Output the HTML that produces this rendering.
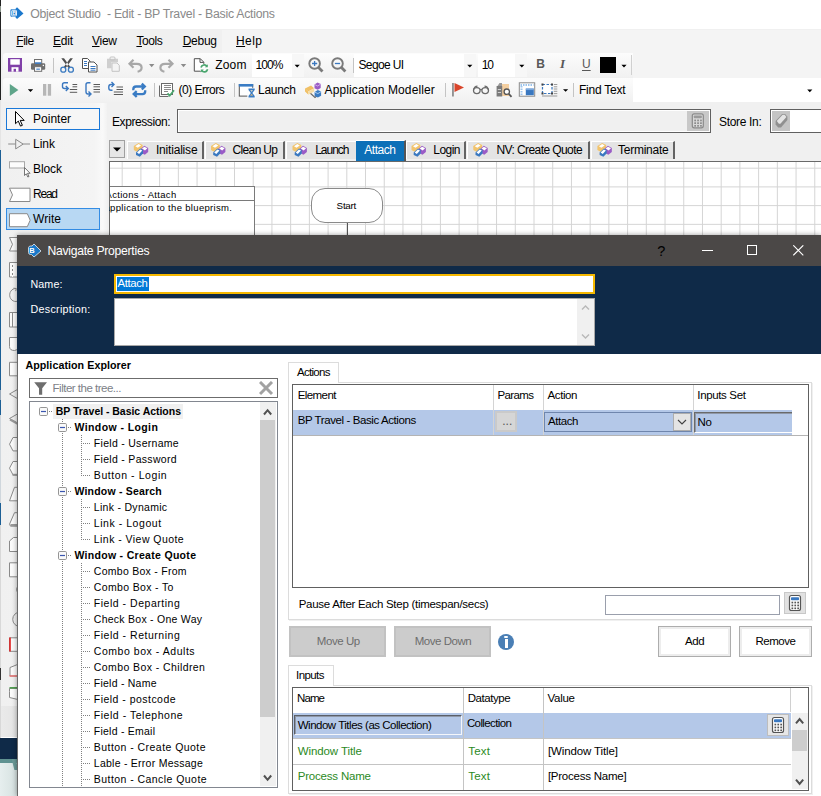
<!DOCTYPE html>
<html><head><meta charset="utf-8"><title>Object Studio - Navigate Properties</title>
<style>
html,body{margin:0;padding:0}
body{width:821px;height:796px;overflow:hidden;position:relative;background:#f0f0f0;font-family:"Liberation Sans",sans-serif;font-size:12px}
div,span,svg{position:absolute;box-sizing:border-box}
.t{white-space:pre;line-height:1}
.t u{text-decoration-thickness:1px;text-underline-offset:1px}
.cv{clip-path:inset(0 0 0 4.5px)}
.tab{top:141px;height:18px;background:#e4e4e4;border-top:1px solid #fff;border-left:1px solid #fff;border-right:2px solid #636363}
.sep{width:1px;background:#bdbdbd}
</style></head><body>
<!-- main title bar -->
<div style="left:0;top:0;width:821px;height:29px;background:#fff"></div>
<!-- menu bar -->
<div style="left:0;top:29px;width:821px;height:24px;background:#f0f0f0"></div>
<div style="left:222px;top:30px;width:599px;height:23px;background:#f4f4f4"></div>
<div style="left:633px;top:53px;width:188px;height:25px;background:#f4f4f4"></div>
<!-- toolbars -->
<div id="tb1" style="left:3px;top:53px;width:630px;height:24px;background:linear-gradient(#fcfcfc,#f1f1f1);border-radius:3px 0 0 0"></div>
<div id="tb2" style="left:3px;top:78px;width:818px;height:24px;background:linear-gradient(#fcfcfc,#f1f1f1);border-radius:3px 0 0 0"></div>
<!-- toolbar combos -->
<div style="left:252px;top:54px;width:52px;height:23px;background:linear-gradient(to right,#fff 40px,#f7f7f7 40px)"></div>
<div style="left:354px;top:54px;width:122px;height:23px;background:linear-gradient(to right,#fff 110px,#f7f7f7 110px)"></div>
<div style="left:478px;top:54px;width:49px;height:23px;background:linear-gradient(to right,#fff 37px,#f7f7f7 37px)"></div>
<div style="left:633px;top:78px;width:188px;height:24px;background:#fff"></div>
<div style="left:600px;top:57px;width:16px;height:16px;background:#000"></div>
<svg style="left:0;top:0" width="821" height="104" viewBox="0 0 821 104">
<!-- logo -->
<g id="logo1"><path d="M11.600 9.200h3.600l1.800-1.900l6.500 6.100l-6.500 5.500l-2-2.100h-3.400q-1.200 0-1.200-1.200v-5.200q0-1.200 1.200-1.200z" fill="#1b78cc"/><rect x="11.700" y="10.300" width="4.800" height="5.600" rx=".8" fill="none" stroke="#fff" stroke-width=".9"/><text x="12.300" y="15.300" font-size="5.500" font-weight="700" fill="#fff" font-family="Liberation Sans, sans-serif">B</text></g>
<!-- save -->
<path d="M8 58h14v13.700h-14z" fill="#8040a8"/><rect x="10.300" y="59.2" width="9.500" height="5.500" fill="#fff"/><rect x="11.500" y="67.200" width="7" height="4.500" fill="#fff"/><rect x="13.600" y="68.800" width="2.400" height="2.900" fill="#8040a8"/>
<!-- print -->
<rect x="31" y="63.200" width="14.200" height="6.500" rx="1.200" fill="#6e6e6e"/><rect x="34.500" y="59.500" width="7.200" height="4.300" fill="#fff" stroke="#6e6e6e" stroke-width="1"/><rect x="35" y="62.300" width="6.200" height="1.600" fill="#3a78c0"/><rect x="34.500" y="66.700" width="7.200" height="4.600" fill="#fff" stroke="#6e6e6e" stroke-width="1"/><rect x="36.300" y="68.600" width="3.600" height="1.100" fill="#3a78c0"/><rect x="42.700" y="64.800" width="1.300" height="1.300" fill="#fff"/>
<!-- seps row1 -->
<rect x="53" y="58" width="1" height="15" fill="#c4c4c4"/><rect x="353" y="58" width="1" height="15" fill="#c4c4c4"/><rect x="631" y="55" width="1" height="20" fill="#d0d0d0"/>
<!-- scissors -->
<path d="M61.300 58.300h2.700l6.600 9l-1.700 1.300zM72.900 58.300h-2.700l-6.600 9l1.700 1.300z" fill="#505050"/><circle cx="63.300" cy="69.700" r="2.500" fill="none" stroke="#3a7ac0" stroke-width="1.300"/><circle cx="70.900" cy="69.700" r="2.500" fill="none" stroke="#3a7ac0" stroke-width="1.300"/>
<!-- copy -->
<path d="M82.500 58.500h5l2.500 2.500v7.500h-7.500z" fill="#fff" stroke="#505050"/><path d="M88.500 62h5.500l3 3v7h-8.500z" fill="#fff" stroke="#505050"/><path d="M84 61.500h3M84 63.500h3M84 65.500h3M90.500 66.500h5M90.500 68.500h5M90.500 70.200h5" stroke="#3a78c0" stroke-width="1"/>
<!-- paste -->
<path d="M107 58.800h11v3.500h-6.500v6h-4.500z" fill="#cfcfcf"/><rect x="110" y="57" width="5" height="3" rx="1" fill="none" stroke="#c4c4c4" stroke-width="1"/><path d="M112 63h5l2.300 2.300v6h-7.300z" fill="#f4f4f4" stroke="#c4c4c4"/>
<!-- undo / redo -->
<path d="M133.500 59.800L129.500 63.800L133.500 67.800M129.800 63.800h7q4.800 0 4.800 4q0 3-4 4" stroke="#a8a8a8" stroke-width="2.200" fill="none"/>
<path d="M168.500 59.800L172.500 63.800L168.500 67.800M172.200 63.800h-7q-4.800 0-4.800 4q0 3 4 4" stroke="#a8a8a8" stroke-width="2.200" fill="none"/>
<path d="M149 64h5.400l-2.700 3.200zM180.800 64h5.400l-2.700 3.200z" fill="#8c8c8c"/>
<!-- doc refresh -->
<path d="M194.300 58.700h6l3.500 3.500v9h-9.500z" fill="#fff" stroke="#505050"/><path d="M200 58.700v3.700h3.700" fill="none" stroke="#505050"/><circle cx="204.300" cy="68.400" r="4.600" fill="#fdfdfd"/><path d="M201 67.500a3.400 3.400 0 0 1 6-1.300M207.600 69.300a3.400 3.400 0 0 1-6 1.300" stroke="#4aa56e" stroke-width="1.700" fill="none"/><path d="M207.800 64.300v3h-3zM200.800 72.500v-3h3z" fill="#4aa56e"/>
<!-- combo arrows -->
<path d="M294.600 64.800h5.200l-2.600 2.600zM467.200 64.800h5.200l-2.600 2.600zM519.200 64.800h5.200l-2.600 2.600zM621.400 64.800h5.200l-2.600 2.600zM807.200 89.600h5.200l-2.600 2.600zM563 89.200h5.200l-2.600 2.600zM27.800 89.200h5.400l-2.700 2.800z" fill="#000"/>
<!-- zoom in/out -->
<g fill="none"><circle cx="314.600" cy="63.500" r="5.300" stroke="#7a7a7a" stroke-width="1.900"/><path d="M318.300 67.300L322.500 71.500" stroke="#7a7a7a" stroke-width="2.800"/><path d="M312 63.500h5.200M314.600 60.900v5.200" stroke="#3a78c0" stroke-width="1.300"/>
<circle cx="337.500" cy="63.500" r="5.300" stroke="#7a7a7a" stroke-width="1.900"/><path d="M341.200 67.300L345.400 71.500" stroke="#7a7a7a" stroke-width="2.800"/><path d="M334.900 63.500h5.200" stroke="#3a78c0" stroke-width="1.300"/></g>
<!-- row 2 -->
<path d="M9.800 84.100v11.900l8.600-5.950z" fill="#5fa58a"/>
<rect x="43" y="84" width="3.300" height="11.700" fill="#b6b6b6"/><rect x="47.800" y="84" width="3.300" height="11.700" fill="#b6b6b6"/>
<!-- step in -->
<g fill="none" stroke="#3a78c0" stroke-width="1.400"><path d="M68 82.800h-3.500q-2 0-2 2v1.700q0 2 2 2h3.500M65.800 86L68.300 88.500L65.800 91"/>
<path d="M90.500 82.800h-2.500q-2 0-2 2v7q0 2.200 2 2.200h2M88.500 91.500L91 94L88.500 96.500"/>
<path d="M113.500 84.500h-2.500q-2.200 0-2.200 2.200v1.300q0 2.200 2.200 2.200h1.500M111.500 82L114 84.500L111.500 87"/></g>
<g stroke="#5a5a5a" stroke-width="1"><path d="M72.500 84.500h4.700M72.500 86.800h4.700M69.800 89.500h7.400M69.800 92.300h7.400"/><path d="M93.500 84.500h6.500M93.500 86.800h6.500M93.500 89.500h6.500M93.500 92h6.500"/><path d="M116.500 87h6.500M116.500 89.500h6.500M113.800 92h9.200M113.800 94.500h9.200"/></g>
<!-- loop -->
<g fill="none" stroke="#3a7cc4" stroke-width="2.300"><path d="M133.300 90.300v-1q0-2.800 2.800-2.800h8.500M141.800 83.700L144.800 86.600L141.800 89.500"/><path d="M145.200 90.300v1q0 2.800-2.800 2.800h-8.500M136.700 91.200L133.700 94.100L136.700 97"/></g>
<!-- seps row2 -->
<rect x="154" y="83" width="1" height="14" fill="#c4c4c4"/><rect x="234" y="83" width="1" height="14" fill="#c4c4c4"/><rect x="445" y="83" width="1" height="14" fill="#c4c4c4"/><rect x="573" y="83" width="1" height="14" fill="#c4c4c4"/>
<!-- errors -->
<path d="M159.500 85.500v11h9" fill="none" stroke="#6a6a6a"/><rect x="161.500" y="83.500" width="11" height="11" fill="#fff" stroke="#6a6a6a"/><path d="M163.500 85.500h7M163.500 87.500h7M163.500 89.500h7M163.500 91.500h4" stroke="#8a8a8a" stroke-width="1" shape-rendering="crispEdges"/><path d="M167.500 93.300L169.700 95.700L174 90.300" fill="none" stroke="#4aa56e" stroke-width="1.800"/>
<!-- launch -->
<rect x="239.300" y="84.500" width="13.400" height="11.600" fill="#fff" stroke="#555"/><rect x="238.800" y="84" width="14.400" height="2.600" fill="#3a7cc4"/><rect x="247.300" y="87.800" width="8.400" height="10" fill="#fdfdfd"/><path d="M248.500 88.600h6.200v1.300l-2.300 3.100l2.300 3.100v1.300h-6.200v-1.300l2.300-3.100l-2.300-3.100z" fill="#3a7cc4"/><path d="M250 95.500l1.600-1.600l1.600 1.600z" fill="#f4c27a"/><path d="M250.200 90.200h2.800l-1.400 1.600z" fill="#f7e4c4"/>
<!-- app modeller -->
<path d="M309 92L315 97.500L318 95" fill="none" stroke="#6a6a6a" stroke-width="1.200"/><path d="M305 88.500l6-3l3.200 2.800l-6 3.200zM305 88.500v3l3.200 3v-3.200z" fill="#f0c066"/><path d="M308.200 91.500l6-3.200v3.200l-6 3.200z" fill="#f7dca4"/><path d="M314.500 84.500l3-2l3.200 1.500v4l-3 1.800l-3.200-1.600z" fill="#9a5cc6"/><path d="M314.500 84.500l3.200 1.500l3-2" fill="none" stroke="#d9c2ec" stroke-width=".8"/><path d="M314.600 92l3.200-2l3.300 1.600v4.200l-3.200 1.800l-3.300-1.600z" fill="#3a7cc4"/><path d="M314.600 92l3.300 1.600l3.200-2" fill="none" stroke="#c4daf2" stroke-width=".8"/>
<!-- flag -->
<rect x="452.200" y="83" width="1.500" height="13.500" fill="#7a7a7a"/><path d="M454.500 83v9l9.500-4.500z" fill="#d9452b"/>
<!-- glasses -->
<g fill="none" stroke="#6a6a6a" stroke-width="1.300"><ellipse cx="476.800" cy="90.600" rx="3.300" ry="3"/><ellipse cx="485.200" cy="90.600" rx="3.300" ry="3"/><path d="M473.500 90q1-3.800 4-3.800M488.500 90q-1-3.800-4-3.800M480.100 89.800q.9-.8 1.800 0"/></g>
<!-- find -->
<rect x="502" y="84" width="7" height="12" fill="#f4cfa0"/><rect x="496.600" y="86" width="5.600" height="10.500" fill="#7a7a7a"/><path d="M497.500 86l2-3h2.500v3z" fill="#9a9a9a"/><path d="M497.800 89.500h3.200M497.800 92.500h3.200" stroke="#d0d0d0" stroke-width="1"/><circle cx="506.800" cy="91.700" r="2.700" fill="#fff" stroke="#555" stroke-width="1.300"/><path d="M508.800 93.800L511.500 96.800" stroke="#555" stroke-width="1.800"/>
<!-- window icon -->
<rect x="519.300" y="82.800" width="15.400" height="13.400" fill="#fff" stroke="#8a8a8a"/><path d="M520.500 85h13M521.500 86v9" stroke="#9cc4ec" stroke-width="2" stroke-dasharray="1.500 1"/><rect x="525.800" y="88.600" width="8" height="6.600" fill="#3a78c0"/><rect x="525.800" y="88.600" width="8" height="1.500" fill="#7aa8dc"/>
<!-- dashed select -->
<rect x="542.500" y="84.500" width="9.500" height="9" fill="#fff" stroke="#3a78c0" stroke-width="1.200" stroke-dasharray="2.500 1.500"/><path d="M541.500 83.500h2v2h-2zM551 83.500h2v2h-2zM541.500 92.500h2v2h-2zM551 92.500h2v2h-2z" fill="#444"/><path d="M553.800 84.500h3.500M553.800 86.800h3.500M553.800 89h3.500M553.800 91.300h3.500M553.800 93.600h3.500M542 96h15.300" stroke="#9a9a9a" stroke-width="1"/>
</svg>

<!-- sidebar -->
<div id="side" style="left:1px;top:103px;width:106px;height:693px;background:linear-gradient(to right,#f0f0f0 0,#f4f4f4 88%,#f9f9f9 96%,#f2f2f2 100%)"></div>
<div style="left:6px;top:108px;width:94px;height:22px;border:1px solid #1a78d8;background:#f6f6f6"></div>
<div style="left:6px;top:208px;width:94px;height:22px;border:1px solid #338ce4;background:#b8d8f3"></div>
<svg style="left:0;top:104px" width="110" height="692" viewBox="0 104 110 692">
<path d="M15.500 111.500v12.200l2.800-2.600l2.200 5l1.900-.8l-2.200-4.900h4z" fill="#fff" stroke="#000" stroke-width="1" stroke-linejoin="round"/>
<path d="M8.200 144h7.300M23.200 144h6.800M15.700 139.300v9.600l7.500-4.800z" fill="none" stroke="#8a8a8a" stroke-width="1"/>
<rect x="9.500" y="161.700" width="15" height="6.300" fill="#fcfcfc" stroke="#a8a8a8"/>
<path d="M24.500 167.500v8l1.800-1.700l1.500 3.200l1.200-.5l-1.500-3.200h2.600z" fill="#fff" stroke="#555" stroke-width=".8" stroke-linejoin="round"/>
<path d="M9.500 188.200h20.500v13.300h-20.500l3-6.600z" fill="#fff" stroke="#8a8a8a"/>
<path d="M9.500 213.700h17.800l2.900 6.500l-2.900 6.500h-17.800z" fill="#fff" stroke="#8a8a8a"/>
<path d="M9.500 237.500h12v13.500h-12l3-6.700z" fill="#fbfbfb" stroke="#8a8a8a" stroke-width="1"/>
<path d="M9.500 262.500h12v14.500h-12z" fill="#fbfbfb" stroke="#8a8a8a" stroke-width="1"/>
<path d="M12.500 263v14" fill="none" stroke="#8a8a8a" stroke-width="1"/>
<path d="M12.500 263v14" stroke="#fff" stroke-dasharray="2 2"/>
<path d="M16 288.500a6 6.500 0 1 0 4 11" fill="none" stroke="#8a8a8a" stroke-width="1"/>
<path d="M13.500 288.200l2.800.3l-.6 2.600" fill="none" stroke="#8a8a8a" stroke-width="1"/>
<path d="M9.500 312.500h12v14.500h-12z" fill="#fbfbfb" stroke="#8a8a8a" stroke-width="1"/>
<path d="M12.500 312.500v14.500" fill="none" stroke="#8a8a8a" stroke-width="1"/>
<path d="M9.500 337.500h12v8q-3 5-7 5q-5 0-5-4z" fill="#fbfbfb" stroke="#8a8a8a" stroke-width="1"/>
<path d="M9.500 362.300h12v13.500h-12z" fill="#fbfbfb" stroke="#8a8a8a" stroke-width="1"/>
<path d="M20 388l-10.500 6l10.500 6" fill="none" stroke="#8a8a8a" stroke-width="1"/>
<path d="M20 412.500l-10.500 6l10.500 6" fill="none" stroke="#8a8a8a" stroke-width="1"/>
<path d="M10 419.500l10 5.500" fill="none" stroke="#9a9a9a" stroke-width="2.2"/>
<path d="M20 437.500h-7l-3.500 6.700l3.500 6.700h7" fill="#fbfbfb" stroke="#8a8a8a" stroke-width="1"/>
<path d="M20 461.500h-7l-3.500 6.700l3.500 6.700h7" fill="#fbfbfb" stroke="#8a8a8a" stroke-width="1"/>
<path d="M12.500 474.800h8" fill="none" stroke="#9a9a9a" stroke-width="2"/>
<path d="M20 487.300h-5.500l-5 13.500h10.500" fill="#fbfbfb" stroke="#8a8a8a" stroke-width="1"/>
<path d="M20 512.700h-5.500l-5 11.500l1 2h9.500" fill="#fbfbfb" stroke="#8a8a8a" stroke-width="1"/>
<path d="M10.500 525h9.500" fill="none" stroke="#9a9a9a" stroke-width="2"/>
<path d="M20 537.500h-6.500l-4 3.500v10.500h10.500" fill="#fbfbfb" stroke="#8a8a8a" stroke-width="1"/>
<path d="M9.500 562.800h12v14h-12z" fill="#fbfbfb" stroke="#8a8a8a" stroke-width="1"/>
<path d="M17.500 586.500q-2 3 0 6" fill="none" stroke="#8a8a8a" stroke-width="1"/>
<path d="M20 612a7.300 7.300 0 0 0 0 14.600" fill="none" stroke="#8a8a8a" stroke-width="1"/>
<path d="M20 637.800h-10.500v13.500h10.500" fill="#fbfbfb" stroke="#8a8a8a" stroke-width="1"/>
<path d="M10 637.500v14" fill="none" stroke="#e02020" stroke-width="1.6"/>
<path d="M20 663.500l-10 4v8.500h10" fill="#fbfbfb" stroke="#8a8a8a" stroke-width="1"/>
<path d="M9.500 676h10.500" fill="none" stroke="#f07070" stroke-width="1.4"/>
<path d="M20 688.500h-10.500v3l0 6l10.500 2.500" fill="#fbfbfb" stroke="#8a8a8a" stroke-width="1"/>
<path d="M9.500 687.800h10.500" fill="none" stroke="#50a050" stroke-width="1.6"/>
</svg>
<!-- expression row -->
<div style="left:177px;top:109px;width:534px;height:24px;border:1px solid #606060;background:#f0f0f0;box-shadow:inset 0 0 0 1px #fff"></div>
<div style="left:687px;top:111px;width:22px;height:20px;background:#c8c8c8"></div>
<div style="left:770px;top:109px;width:60px;height:24px;border:1px solid #606060;background:#fff"></div>
<div style="left:772px;top:111px;width:18px;height:20px;background:#c4c4c4"></div>
<!-- tab strip -->
<div style="left:109px;top:140px;width:16px;height:18px;border:1px solid #a0a0a0;background:#e6e6e6"></div>
<svg style="left:109px;top:140px" width="16" height="18" viewBox="0 0 16 18"><path d="M4 7.500h8l-4 4z" fill="#000"/></svg>
<div class="tab" style="left:127px;width:77px"></div>
<div class="tab" style="left:205px;width:80px"></div>
<div class="tab" style="left:286px;width:72px"></div>
<div style="left:356px;top:140px;width:50px;height:21px;background:#0c70b8;border-top:1px solid #fff;border-right:2px solid #555"></div>
<div class="tab" style="left:406px;width:60px"></div>
<div class="tab" style="left:467px;width:123px"></div>
<div class="tab" style="left:591px;width:84px"></div>
<!-- canvas -->
<div id="canvas" style="left:109px;top:161px;width:712px;height:80px;background:#fff;border-top:1px solid #696969;border-left:1px solid #696969;overflow:hidden">
 <div style="left:0;top:0;width:712px;height:80px;background-image:linear-gradient(to right,#d4d4d4 1px,transparent 1px),linear-gradient(to bottom,#d4d4d4 1px,transparent 1px);background-size:18.720px 18.720px;background-position:11.700px 5.700px"></div>
 <div style="left:-2px;top:24px;width:147px;height:60px;border:1px solid #7a7a7a;background:#fff"></div>
 <div style="left:-2px;top:38px;width:147px;height:1px;background:#7a7a7a"></div>
 <div style="left:201px;top:26px;width:72px;height:35px;border:1px solid #8a8a8a;border-radius:14px;background:#fff"></div>
 <div style="left:237px;top:61px;width:1px;height:20px;background:#555"></div>
</div>
<!-- left strip -->
<div style="left:0;top:0;width:1px;height:796px;background:linear-gradient(#222 0,#222 6px,#8a948a 6px,#8a948a 12px,#222 12px,#222 100px,#e4e4e4 100px,#e4e4e4 150px,#1c5f95 150px,#1c5f95 390px,#9ab 390px,#9ab 400px,#1c5f95 400px,#1c5f95 415px,#cfd6dc 415px,#cfd6dc 503px,#1c5f95 503px,#1c5f95 525px,#d8d8d8 525px,#d8d8d8 668px,#333 668px,#333 680px,#d8d8d8 680px)"></div>
<div style="left:1px;top:706px;width:17px;height:31px;background:linear-gradient(to right,#eaeaea,#e4e4e4)"></div>
<div style="left:1px;top:737px;width:17px;height:1px;background:#fff"></div>
<div style="left:0;top:738px;width:18px;height:21px;background:#0f2a48"></div>
<div style="left:0;top:759px;width:18px;height:37px;background:linear-gradient(to right,#e6eeee,#d4e0df)"></div>
<div style="left:0;top:759px;width:18px;height:4px;background:#5f9291"></div>
<div style="left:13px;top:759px;width:4px;height:11px;background:#6b9a98;transform:skewX(14deg)"></div>
<!-- dialog -->
<div id="dlg" style="left:17px;top:235px;width:804px;height:561px;background:#fff;box-shadow:0 0 5px rgba(0,0,0,.4)">
 <div style="left:0;top:0;width:804px;height:31px;background:#4b4847"></div>
 <div style="left:0;top:31px;width:804px;height:88px;background:#0f2a48"></div>
 <div style="left:0;top:119px;width:1px;height:442px;background:#6a6a6a"></div>
</div>
<!-- dialog title buttons -->
<div style="left:702px;top:250px;width:11px;height:1px;background:#fff"></div>
<div style="left:747px;top:245px;width:10px;height:10px;border:1px solid #fff"></div>
<svg style="left:793px;top:245px" width="11" height="11" viewBox="0 0 11 11"><path d="M0.3 0.3L10.300 10.300M10.300 0.3L0.3 10.300" stroke="#fff" stroke-width="1.1" fill="none"/></svg>
<!-- name / description -->
<div style="left:114px;top:274px;width:481px;height:20px;border:2px solid #f5b800;background:#fff"></div>
<div style="left:117px;top:277px;width:31.5px;height:14px;background:#0078d7"></div>
<div style="left:114px;top:298px;width:481px;height:48px;border:1px solid #a8a8a8;background:#fff"></div>
<div style="left:577px;top:299px;width:17px;height:46px;background:#f0f0f0"></div>
<svg style="left:577px;top:299px" width="17" height="46" viewBox="0 0 17 46"><path d="M5 10.5L8.5 7L12 10.5M5 35.5L8.5 39L12 35.5" stroke="#b8b8b8" stroke-width="1.4" fill="none"/></svg>
<!-- application explorer -->
<div style="left:29px;top:378px;width:249px;height:20px;border:1px solid #6c6c6c;background:#fff"></div>
<svg style="left:34px;top:381px" width="15" height="15" viewBox="0 0 15 15"><path d="M0.2 1.200h12.800l-4.800 6v6.500h-3.200v-6.500z" fill="#6e6e6e"/></svg>
<svg style="left:259px;top:381px" width="15" height="15" viewBox="0 0 15 15"><path d="M1 1L13 13M13 1L1 13" stroke="#a2a2a2" stroke-width="3" fill="none"/></svg>
<div id="tree" style="left:29px;top:401px;width:249px;height:387px;border:1px solid #828790;background:#fff"></div>
<div style="left:260px;top:402px;width:16px;height:384px;background:#f0f0f0"></div>
<div style="left:260px;top:420px;width:15px;height:297px;background:#cdcdcd"></div>
<svg style="left:260px;top:402px" width="16" height="384" viewBox="0 0 16 384"><path d="M4 12.500L7.600 8.200L11.200 12.500M4 373.500L7.600 377.800L11.200 373.500" stroke="#505050" stroke-width="2" fill="none"/></svg>
<div style="left:52.5px;top:403.5px;width:130.5px;height:15px;background:#f0f0f0"></div>
<svg style="left:30px;top:402px" width="230" height="385" viewBox="30 402 230 385">
<path d="M62.500 419v368" stroke="#808080" stroke-width="1" stroke-dasharray="1 1" shape-rendering="crispEdges"/>
<path d="M81.500 435.0v41.5" stroke="#808080" stroke-width="1" stroke-dasharray="1 1" shape-rendering="crispEdges"/>
<path d="M81.500 499.0v41.5" stroke="#808080" stroke-width="1" stroke-dasharray="1 1" shape-rendering="crispEdges"/>
<path d="M81.500 563.0v224.5" stroke="#808080" stroke-width="1" stroke-dasharray="1 1" shape-rendering="crispEdges"/>
<path d="M49.0 411.5h4" stroke="#808080" stroke-width="1" stroke-dasharray="1 1" shape-rendering="crispEdges"/>
<rect x="39.5" y="407.5" width="8" height="8" rx="1.200" fill="#fafafa" stroke="#959595"/>
<path d="M41.0 411.5h5" stroke="#3a56b0" stroke-width="1.200"/>
<path d="M68.0 427.5h4" stroke="#808080" stroke-width="1" stroke-dasharray="1 1" shape-rendering="crispEdges"/>
<rect x="58.5" y="423.5" width="8" height="8" rx="1.200" fill="#fafafa" stroke="#959595"/>
<path d="M60.0 427.5h5" stroke="#3a56b0" stroke-width="1.200"/>
<path d="M83 443.5h8" stroke="#808080" stroke-width="1" stroke-dasharray="1 1" shape-rendering="crispEdges"/>
<path d="M83 459.5h8" stroke="#808080" stroke-width="1" stroke-dasharray="1 1" shape-rendering="crispEdges"/>
<path d="M83 475.5h8" stroke="#808080" stroke-width="1" stroke-dasharray="1 1" shape-rendering="crispEdges"/>
<path d="M68.0 491.5h4" stroke="#808080" stroke-width="1" stroke-dasharray="1 1" shape-rendering="crispEdges"/>
<rect x="58.5" y="487.5" width="8" height="8" rx="1.200" fill="#fafafa" stroke="#959595"/>
<path d="M60.0 491.5h5" stroke="#3a56b0" stroke-width="1.200"/>
<path d="M83 507.5h8" stroke="#808080" stroke-width="1" stroke-dasharray="1 1" shape-rendering="crispEdges"/>
<path d="M83 523.5h8" stroke="#808080" stroke-width="1" stroke-dasharray="1 1" shape-rendering="crispEdges"/>
<path d="M83 539.5h8" stroke="#808080" stroke-width="1" stroke-dasharray="1 1" shape-rendering="crispEdges"/>
<path d="M68.0 555.5h4" stroke="#808080" stroke-width="1" stroke-dasharray="1 1" shape-rendering="crispEdges"/>
<rect x="58.5" y="551.5" width="8" height="8" rx="1.200" fill="#fafafa" stroke="#959595"/>
<path d="M60.0 555.5h5" stroke="#3a56b0" stroke-width="1.200"/>
<path d="M83 571.5h8" stroke="#808080" stroke-width="1" stroke-dasharray="1 1" shape-rendering="crispEdges"/>
<path d="M83 587.5h8" stroke="#808080" stroke-width="1" stroke-dasharray="1 1" shape-rendering="crispEdges"/>
<path d="M83 603.5h8" stroke="#808080" stroke-width="1" stroke-dasharray="1 1" shape-rendering="crispEdges"/>
<path d="M83 619.5h8" stroke="#808080" stroke-width="1" stroke-dasharray="1 1" shape-rendering="crispEdges"/>
<path d="M83 635.5h8" stroke="#808080" stroke-width="1" stroke-dasharray="1 1" shape-rendering="crispEdges"/>
<path d="M83 651.5h8" stroke="#808080" stroke-width="1" stroke-dasharray="1 1" shape-rendering="crispEdges"/>
<path d="M83 667.5h8" stroke="#808080" stroke-width="1" stroke-dasharray="1 1" shape-rendering="crispEdges"/>
<path d="M83 683.5h8" stroke="#808080" stroke-width="1" stroke-dasharray="1 1" shape-rendering="crispEdges"/>
<path d="M83 699.5h8" stroke="#808080" stroke-width="1" stroke-dasharray="1 1" shape-rendering="crispEdges"/>
<path d="M83 715.5h8" stroke="#808080" stroke-width="1" stroke-dasharray="1 1" shape-rendering="crispEdges"/>
<path d="M83 731.5h8" stroke="#808080" stroke-width="1" stroke-dasharray="1 1" shape-rendering="crispEdges"/>
<path d="M83 747.5h8" stroke="#808080" stroke-width="1" stroke-dasharray="1 1" shape-rendering="crispEdges"/>
<path d="M83 763.5h8" stroke="#808080" stroke-width="1" stroke-dasharray="1 1" shape-rendering="crispEdges"/>
<path d="M83 779.5h8" stroke="#808080" stroke-width="1" stroke-dasharray="1 1" shape-rendering="crispEdges"/>
</svg>
<!-- Actions tab -->
<div style="left:288px;top:382px;width:524px;height:238px;border:1px solid #dcdcdc;background:#fff;box-shadow:1px 1px 0 #f0f0f0"></div>
<div style="left:288px;top:362px;width:51px;height:21px;border:1px solid #dcdcdc;border-bottom:none;background:#fff"></div>
<div style="left:292px;top:384px;width:517px;height:204px;border:1px solid #606060;background:#fff"></div>
<div style="left:293px;top:410px;width:499px;height:25px;background:#b4c8e8"></div>
<div class="sep" style="left:493px;top:385px;height:50px;background:#d4d4d4"></div>
<div class="sep" style="left:543px;top:385px;height:50px;background:#d4d4d4"></div>
<div class="sep" style="left:693px;top:385px;height:50px;background:#d4d4d4"></div>
<div style="left:293px;top:435px;width:515px;height:1px;background:#b4b4b4"></div>
<div style="left:495px;top:411px;width:22px;height:21px;background:#d6d6d6;border:2px solid #cacaca"></div>
<div style="left:544px;top:412px;width:148px;height:20px;border:1px solid #6f86ad;background:#b4c8e8"></div>
<div style="left:673px;top:413px;width:18px;height:18px;background:#e4e4e4;border:1px solid #adadad"></div>
<svg style="left:673px;top:413px" width="18" height="18" viewBox="0 0 18 18"><path d="M5 7L9 11L13 7" stroke="#404040" stroke-width="1.1" fill="none"/></svg>
<div style="left:694px;top:412px;width:98px;height:21px;border-top:1px solid #6a6a6a;border-left:1px solid #6a6a6a;border-bottom:1px solid #fff;background:#b4c8e8;box-shadow:inset 1px 1px 0 #8f98a8"></div>
<!-- pause row -->
<div style="left:605px;top:595px;width:175px;height:20px;border:1px solid #9a9fac;background:#fff"></div>
<div style="left:784px;top:592px;width:22px;height:22px;background:#e1e1e1;border:1px solid #c8c8c8"></div>
<!-- buttons -->
<div style="left:289px;top:626px;width:97px;height:31px;background:#cccccc;border:2px solid #c2c2c2"></div>
<div style="left:394px;top:626px;width:97px;height:31px;background:#cccccc;border:2px solid #c2c2c2"></div>
<div style="left:658px;top:626px;width:73px;height:31px;background:#fff;border:1px solid #adadad;box-shadow:inset 0 0 0 2px #ededed"></div>
<div style="left:739px;top:626px;width:73px;height:31px;background:#fff;border:1px solid #adadad;box-shadow:inset 0 0 0 2px #ededed"></div>
<div style="left:498px;top:634px;width:16px;height:16px;border-radius:8px;background:#4a7fb5"></div>
<div style="left:504.200px;top:635.600px;width:3.600px;height:2.600px;border-radius:1.300px;background:#fff"></div>
<div style="left:504.500px;top:639.400px;width:3px;height:8.600px;background:#fff"></div>
<!-- Inputs tab -->
<div style="left:288px;top:685px;width:524px;height:109px;border:1px solid #dcdcdc;background:#fff;box-shadow:1px 1px 0 #f0f0f0"></div>
<div style="left:288px;top:665px;width:46px;height:21px;border:1px solid #dcdcdc;border-bottom:none;background:#fff"></div>
<div style="left:292px;top:687px;width:517px;height:104px;border:1px solid #606060;background:#fff"></div>
<div style="left:293px;top:713px;width:498px;height:25px;background:#b4c8e8"></div>
<div class="sep" style="left:463px;top:688px;height:102px;background:#c4c4c4"></div>
<div class="sep" style="left:543px;top:688px;height:102px;background:#c4c4c4"></div>
<div class="sep" style="left:790px;top:688px;height:24px;background:#d0d0d0"></div>
<div style="left:293px;top:738px;width:498px;height:1px;background:#c4c4c4"></div>
<div style="left:293px;top:764px;width:498px;height:1px;background:#c4c4c4"></div>
<div style="left:294px;top:715px;width:168px;height:20px;border:1px solid #f4f6fa;border-top:1px solid #5a5f68;border-left:1px solid #5a5f68;background:#b4c8e8;box-shadow:inset 1px 1px 0 #8f98a8"></div>
<div style="left:767px;top:714px;width:22px;height:22px;background:#e6e6e6;border:1px solid #bdbdbd"></div>
<div style="left:792px;top:713px;width:16px;height:76px;background:#f0f0f0"></div>
<div style="left:792px;top:729.500px;width:15px;height:21.500px;background:#cdcdcd"></div>
<svg style="left:792px;top:713px" width="16" height="76" viewBox="0 0 16 76"><path d="M4 10.300L7.600 6L11.200 10.300M4 66.700L7.600 71L11.200 66.700" stroke="#505050" stroke-width="2" fill="none"/></svg>
<svg style="left:0;top:0" width="821" height="796" viewBox="0 0 821 796">
<g transform="translate(133.8 142.9)">
<path d="M0 3.200L4.800 0L8.800 2.200V5.500L3 8.800L0 7z" fill="#f2c46c"/><path d="M1.500 3.300L4.800 1.200L7.300 2.600L4 4.800z" fill="#fff"/>
<path d="M7.300 5.500L10.500 2.900L14.400 5V9L11 11.900L9 10.800z" fill="#9a5cc6"/><path d="M8.200 5.700L10.600 3.800L13.600 5.300L11.200 7.600z" fill="#fff"/>
<path d="M2.200 9.500L6.500 5.600L9.200 7V10.500L6 13.900L2.200 12z" fill="#3a78c0"/><path d="M3.200 9.600L6.400 6.700L8.500 7.700L5.300 11z" fill="#fff"/>
</g>
<g transform="translate(211.0 142.9)">
<path d="M0 3.200L4.800 0L8.800 2.200V5.500L3 8.800L0 7z" fill="#f2c46c"/><path d="M1.500 3.300L4.800 1.200L7.300 2.600L4 4.800z" fill="#fff"/>
<path d="M7.300 5.500L10.500 2.900L14.400 5V9L11 11.900L9 10.800z" fill="#9a5cc6"/><path d="M8.200 5.700L10.600 3.800L13.600 5.300L11.200 7.600z" fill="#fff"/>
<path d="M2.200 9.500L6.500 5.600L9.200 7V10.500L6 13.900L2.200 12z" fill="#3a78c0"/><path d="M3.200 9.600L6.400 6.700L8.500 7.700L5.300 11z" fill="#fff"/>
</g>
<g transform="translate(292.5 142.9)">
<path d="M0 3.200L4.800 0L8.800 2.200V5.500L3 8.800L0 7z" fill="#f2c46c"/><path d="M1.500 3.300L4.800 1.200L7.300 2.600L4 4.800z" fill="#fff"/>
<path d="M7.300 5.500L10.500 2.900L14.400 5V9L11 11.900L9 10.800z" fill="#9a5cc6"/><path d="M8.200 5.700L10.600 3.800L13.600 5.300L11.200 7.600z" fill="#fff"/>
<path d="M2.200 9.500L6.500 5.600L9.200 7V10.500L6 13.900L2.200 12z" fill="#3a78c0"/><path d="M3.200 9.600L6.400 6.700L8.500 7.700L5.300 11z" fill="#fff"/>
</g>
<g transform="translate(411.5 142.9)">
<path d="M0 3.200L4.800 0L8.800 2.200V5.500L3 8.800L0 7z" fill="#f2c46c"/><path d="M1.500 3.300L4.800 1.200L7.300 2.600L4 4.800z" fill="#fff"/>
<path d="M7.300 5.500L10.500 2.900L14.400 5V9L11 11.900L9 10.800z" fill="#9a5cc6"/><path d="M8.200 5.700L10.600 3.800L13.600 5.300L11.200 7.600z" fill="#fff"/>
<path d="M2.200 9.500L6.500 5.600L9.200 7V10.500L6 13.900L2.200 12z" fill="#3a78c0"/><path d="M3.200 9.600L6.400 6.700L8.500 7.700L5.300 11z" fill="#fff"/>
</g>
<g transform="translate(473.3 142.9)">
<path d="M0 3.200L4.800 0L8.800 2.200V5.500L3 8.800L0 7z" fill="#f2c46c"/><path d="M1.500 3.300L4.800 1.200L7.300 2.600L4 4.800z" fill="#fff"/>
<path d="M7.300 5.500L10.500 2.900L14.400 5V9L11 11.900L9 10.800z" fill="#9a5cc6"/><path d="M8.200 5.700L10.600 3.800L13.600 5.300L11.200 7.600z" fill="#fff"/>
<path d="M2.200 9.500L6.500 5.600L9.200 7V10.500L6 13.900L2.200 12z" fill="#3a78c0"/><path d="M3.200 9.600L6.400 6.700L8.500 7.700L5.300 11z" fill="#fff"/>
</g>
<g transform="translate(597.4 142.9)">
<path d="M0 3.200L4.800 0L8.800 2.200V5.500L3 8.800L0 7z" fill="#f2c46c"/><path d="M1.500 3.300L4.800 1.200L7.300 2.600L4 4.800z" fill="#fff"/>
<path d="M7.300 5.500L10.500 2.900L14.400 5V9L11 11.900L9 10.800z" fill="#9a5cc6"/><path d="M8.200 5.700L10.600 3.800L13.600 5.300L11.200 7.600z" fill="#fff"/>
<path d="M2.200 9.500L6.500 5.600L9.200 7V10.500L6 13.900L2.200 12z" fill="#3a78c0"/><path d="M3.200 9.600L6.400 6.700L8.500 7.700L5.300 11z" fill="#fff"/>
</g>
<rect x="789.5" y="595.5" width="11" height="15" rx="2" fill="#fff" stroke="#555" stroke-width="1.200"/>
<rect x="791.0" y="597.3" width="8" height="3" rx=".8" fill="#3a78c0"/>
<rect x="791.5" y="601.7" width="1.700" height="1.700" fill="#555"/>
<rect x="791.5" y="604.6" width="1.700" height="1.700" fill="#555"/>
<rect x="791.5" y="607.5" width="1.700" height="1.700" fill="#555"/>
<rect x="794.4" y="601.7" width="1.700" height="1.700" fill="#555"/>
<rect x="794.4" y="604.6" width="1.700" height="1.700" fill="#555"/>
<rect x="794.4" y="607.5" width="1.700" height="1.700" fill="#555"/>
<rect x="797.3" y="601.7" width="1.700" height="1.700" fill="#555"/>
<rect x="797.3" y="604.6" width="1.700" height="1.700" fill="#555"/>
<rect x="797.3" y="607.5" width="1.700" height="1.700" fill="#555"/>
<rect x="772.5" y="717.5" width="11" height="15" rx="2" fill="#fff" stroke="#555" stroke-width="1.200"/>
<rect x="774.0" y="719.3" width="8" height="3" rx=".8" fill="#3a78c0"/>
<rect x="774.5" y="723.7" width="1.700" height="1.700" fill="#555"/>
<rect x="774.5" y="726.6" width="1.700" height="1.700" fill="#555"/>
<rect x="774.5" y="729.5" width="1.700" height="1.700" fill="#555"/>
<rect x="777.4" y="723.7" width="1.700" height="1.700" fill="#555"/>
<rect x="777.4" y="726.6" width="1.700" height="1.700" fill="#555"/>
<rect x="777.4" y="729.5" width="1.700" height="1.700" fill="#555"/>
<rect x="780.3" y="723.7" width="1.700" height="1.700" fill="#555"/>
<rect x="780.3" y="726.6" width="1.700" height="1.700" fill="#555"/>
<rect x="780.3" y="729.5" width="1.700" height="1.700" fill="#555"/>
<rect x="692.300" y="113.800" width="11" height="14" rx="2" fill="#d8d8d8" stroke="#8a8a8a" stroke-width="1.200"/><rect x="693.800" y="115.500" width="8" height="2.800" rx=".8" fill="#9a9a9a"/>
<rect x="694.3" y="119.6" width="1.700" height="1.700" fill="#8a8a8a"/>
<rect x="694.3" y="122.3" width="1.700" height="1.700" fill="#8a8a8a"/>
<rect x="694.3" y="125.0" width="1.700" height="1.700" fill="#8a8a8a"/>
<rect x="697.2" y="119.6" width="1.700" height="1.700" fill="#8a8a8a"/>
<rect x="697.2" y="122.3" width="1.700" height="1.700" fill="#8a8a8a"/>
<rect x="697.2" y="125.0" width="1.700" height="1.700" fill="#8a8a8a"/>
<rect x="700.1" y="119.6" width="1.700" height="1.700" fill="#8a8a8a"/>
<rect x="700.1" y="122.3" width="1.700" height="1.700" fill="#8a8a8a"/>
<rect x="700.1" y="125.0" width="1.700" height="1.700" fill="#8a8a8a"/>
<path d="M775.600 121l6.500-7h3l2.300 2.800v3.200l-6.400 7.500h-2.900l-2.500-3z" fill="#909090"/><path d="M776.800 121l5.800-6.200h2l1.800 2.200l-6 6.800h-1.500z" fill="#e4e4e4"/>
<path d="M28.500 247.500q.5-1.500 2-1.500h1.500l2-2l7 7l-7 6l-2.500-2.500h-1q-2 0-2-2z" fill="#1a78c8" stroke="#e8eef4" stroke-width=".8"/>
<text x="29.300" y="253.300" font-size="7.500" font-weight="700" fill="#fff" font-family="Liberation Sans, sans-serif">B</text>
</svg>
<span class="t" style="left:30.20px;top:8.00px;font-size:12.3px;color:#8a8a8a;letter-spacing:-0.263px;">Object Studio  - Edit - BP Travel - Basic Actions</span>
<span class="t" style="left:16.30px;top:35.00px;font-size:12px;color:#000;letter-spacing:-0.515px;"><u>F</u>ile</span>
<span class="t" style="left:53.10px;top:35.00px;font-size:12px;color:#000;letter-spacing:-0.263px;"><u>E</u>dit</span>
<span class="t" style="left:92.00px;top:35.00px;font-size:12px;color:#000;letter-spacing:-0.266px;"><u>V</u>iew</span>
<span class="t" style="left:136.40px;top:35.00px;font-size:12px;color:#000;letter-spacing:-0.429px;"><u>T</u>ools</span>
<span class="t" style="left:182.70px;top:35.00px;font-size:12px;color:#000;letter-spacing:-0.269px;"><u>D</u>ebug</span>
<span class="t" style="left:236.00px;top:35.00px;font-size:12px;color:#000;letter-spacing:0.438px;"><u>H</u>elp</span>
<span class="t" style="left:215.30px;top:59.00px;font-size:12px;color:#000;letter-spacing:0.137px;">Zoom</span>
<span class="t" style="left:255.50px;top:59.00px;font-size:12px;color:#000;letter-spacing:-0.901px;">100%</span>
<span class="t" style="left:358.50px;top:59.00px;font-size:12px;color:#000;letter-spacing:-0.650px;">Segoe UI</span>
<span class="t" style="left:481.80px;top:59.00px;font-size:12px;color:#000;letter-spacing:-1.159px;">10</span>
<span class="t" style="left:536.20px;top:58.00px;font-size:12px;color:#585858;font-weight:700;">B</span>
<span class="t" style="left:560.00px;top:56.60px;font-size:13px;color:#585858;font-weight:700;font-family:'Liberation Serif',serif;font-style:italic;">I</span>
<span class="t" style="left:582.00px;top:58.00px;font-size:12px;color:#585858;text-decoration:underline;text-underline-offset:1.5px;">U</span>
<span class="t" style="left:178.50px;top:84.00px;font-size:12px;color:#000;letter-spacing:-0.486px;">(0) Errors</span>
<span class="t" style="left:258.00px;top:84.00px;font-size:12px;color:#000;letter-spacing:-0.275px;">Launch</span>
<span class="t" style="left:324.60px;top:84.00px;font-size:12px;color:#000;letter-spacing:0.112px;">Application Modeller</span>
<span class="t" style="left:579.00px;top:84.00px;font-size:12px;color:#000;letter-spacing:-0.234px;">Find Text</span>
<span class="t" style="left:33.00px;top:113.00px;font-size:12px;color:#000;letter-spacing:0.011px;">Pointer</span>
<span class="t" style="left:33.00px;top:138.00px;font-size:12px;color:#000;letter-spacing:-0.005px;">Link</span>
<span class="t" style="left:33.00px;top:163.00px;font-size:12px;color:#000;letter-spacing:-0.086px;">Block</span>
<span class="t" style="left:33.00px;top:188.00px;font-size:12px;color:#000;letter-spacing:-1.229px;">Read</span>
<span class="t" style="left:33.00px;top:213.00px;font-size:12px;color:#000;letter-spacing:0.055px;">Write</span>
<span class="t" style="left:112.00px;top:116.00px;font-size:12px;color:#000;letter-spacing:-0.420px;">Expression:</span>
<span class="t" style="left:719.00px;top:116.00px;font-size:12px;color:#000;letter-spacing:-0.320px;">Store In:</span>
<span class="t" style="left:155.90px;top:144.00px;font-size:12px;color:#000;letter-spacing:-0.184px;">Initialise</span>
<span class="t" style="left:232.60px;top:144.00px;font-size:12px;color:#000;letter-spacing:-0.662px;">Clean Up</span>
<span class="t" style="left:315.20px;top:144.00px;font-size:12px;color:#000;letter-spacing:-1.015px;">Launch</span>
<span class="t" style="left:364.20px;top:144.00px;font-size:12px;color:#fff;letter-spacing:-0.446px;">Attach</span>
<span class="t" style="left:433.30px;top:144.00px;font-size:12px;color:#000;letter-spacing:-0.544px;">Login</span>
<span class="t" style="left:496.40px;top:144.00px;font-size:12px;color:#000;letter-spacing:-0.582px;">NV: Create Quote</span>
<span class="t" style="left:618.00px;top:144.00px;font-size:12px;color:#000;letter-spacing:-0.248px;">Terminate</span>
<span class="t cv" style="left:105.50px;top:190.00px;font-size:9.5px;color:#000;letter-spacing:0.312px;">Actions - Attach</span>
<span class="t cv" style="left:104.50px;top:203.00px;font-size:9.5px;color:#000;letter-spacing:0.329px;">application to the blueprism.</span>
<span class="t" style="left:336.60px;top:201.00px;font-size:9.8px;color:#000;letter-spacing:-0.251px;">Start</span>
<span class="t" style="left:47.40px;top:245.00px;font-size:12.2px;color:#fff;letter-spacing:-0.275px;">Navigate Properties</span>
<span class="t" style="left:657.30px;top:244.00px;font-size:14.5px;color:#000;">?</span>
<span class="t" style="left:30.50px;top:279.00px;font-size:10.7px;color:#fff;letter-spacing:0.104px;">Name:</span>
<span class="t" style="left:30.50px;top:304.00px;font-size:10.7px;color:#fff;letter-spacing:0.297px;">Description:</span>
<span class="t" style="left:117.50px;top:278.00px;font-size:11.3px;color:#fff;letter-spacing:-0.346px;">Attach</span>
<span class="t" style="left:25.40px;top:360.00px;font-size:10.7px;color:#000;font-weight:700;letter-spacing:0.056px;">Application Explorer</span>
<span class="t" style="left:52.60px;top:383.00px;font-size:11.5px;color:#7d7f88;letter-spacing:-0.503px;">Filter the tree...</span>
<span class="t" style="left:55.70px;top:406.00px;font-size:10.5px;color:#000;font-weight:700;letter-spacing:-0.032px;">BP Travel - Basic Actions</span>
<span class="t" style="left:74.40px;top:422.00px;font-size:10.5px;color:#000;font-weight:700;letter-spacing:0.418px;">Window - Login</span>
<span class="t" style="left:93.80px;top:438.00px;font-size:10.5px;color:#000;letter-spacing:0.291px;">Field - Username</span>
<span class="t" style="left:93.80px;top:454.00px;font-size:10.5px;color:#000;letter-spacing:0.306px;">Field - Password</span>
<span class="t" style="left:93.80px;top:470.00px;font-size:10.5px;color:#000;letter-spacing:0.578px;">Button - Login</span>
<span class="t" style="left:74.40px;top:486.00px;font-size:10.5px;color:#000;font-weight:700;letter-spacing:0.207px;">Window - Search</span>
<span class="t" style="left:93.80px;top:502.00px;font-size:10.5px;color:#000;letter-spacing:0.297px;">Link - Dynamic</span>
<span class="t" style="left:93.80px;top:518.00px;font-size:10.5px;color:#000;letter-spacing:0.548px;">Link - Logout</span>
<span class="t" style="left:93.80px;top:534.00px;font-size:10.5px;color:#000;letter-spacing:0.451px;">Link - View Quote</span>
<span class="t" style="left:74.40px;top:550.00px;font-size:10.5px;color:#000;font-weight:700;letter-spacing:0.309px;">Window - Create Quote</span>
<span class="t" style="left:93.80px;top:566.00px;font-size:10.5px;color:#000;letter-spacing:0.268px;">Combo Box - From</span>
<span class="t" style="left:93.80px;top:582.00px;font-size:10.5px;color:#000;letter-spacing:0.347px;">Combo Box - To</span>
<span class="t" style="left:93.80px;top:598.00px;font-size:10.5px;color:#000;letter-spacing:0.523px;">Field - Departing</span>
<span class="t" style="left:93.80px;top:614.00px;font-size:10.5px;color:#000;letter-spacing:0.262px;">Check Box - One Way</span>
<span class="t" style="left:93.80px;top:630.00px;font-size:10.5px;color:#000;letter-spacing:0.523px;">Field - Returning</span>
<span class="t" style="left:93.80px;top:646.00px;font-size:10.5px;color:#000;letter-spacing:0.539px;">Combo box - Adults</span>
<span class="t" style="left:93.80px;top:662.00px;font-size:10.5px;color:#000;letter-spacing:0.411px;">Combo Box - Children</span>
<span class="t" style="left:93.80px;top:678.00px;font-size:10.5px;color:#000;letter-spacing:0.236px;">Field - Name</span>
<span class="t" style="left:93.80px;top:694.00px;font-size:10.5px;color:#000;letter-spacing:0.472px;">Field - postcode</span>
<span class="t" style="left:93.80px;top:710.00px;font-size:10.5px;color:#000;letter-spacing:0.527px;">Field - Telephone</span>
<span class="t" style="left:93.80px;top:726.00px;font-size:10.5px;color:#000;letter-spacing:0.237px;">Field - Email</span>
<span class="t" style="left:93.80px;top:742.00px;font-size:10.5px;color:#000;letter-spacing:0.453px;">Button - Create Quote</span>
<span class="t" style="left:93.80px;top:758.00px;font-size:10.5px;color:#000;letter-spacing:0.255px;">Lable - Error Message</span>
<span class="t" style="left:93.80px;top:774.00px;font-size:10.5px;color:#000;letter-spacing:0.445px;">Button - Cancle Quote</span>
<span class="t" style="left:297.00px;top:367.00px;font-size:11.5px;color:#000;letter-spacing:-0.703px;">Actions</span>
<span class="t" style="left:297.70px;top:390.00px;font-size:11.5px;color:#000;letter-spacing:-0.581px;">Element</span>
<span class="t" style="left:497.60px;top:390.00px;font-size:11.5px;color:#000;letter-spacing:-0.645px;">Params</span>
<span class="t" style="left:547.50px;top:390.00px;font-size:11.5px;color:#000;letter-spacing:-0.394px;">Action</span>
<span class="t" style="left:697.30px;top:390.00px;font-size:11.5px;color:#000;letter-spacing:-0.355px;">Inputs Set</span>
<span class="t" style="left:297.70px;top:415.00px;font-size:11.5px;color:#000;letter-spacing:-0.407px;">BP Travel - Basic Actions</span>
<span class="t" style="left:502.30px;top:415.00px;font-size:12px;color:#555;letter-spacing:-0.008px;">...</span>
<span class="t" style="left:548.10px;top:416.00px;font-size:11.5px;color:#000;letter-spacing:-0.462px;">Attach</span>
<span class="t" style="left:697.60px;top:417.00px;font-size:11.5px;color:#000;letter-spacing:-0.303px;">No</span>
<span class="t" style="left:298.70px;top:599.00px;font-size:11.5px;color:#000;letter-spacing:-0.280px;">Pause After Each Step (timespan/secs)</span>
<span class="t" style="left:316.80px;top:636.00px;font-size:11.5px;color:#6d6d6d;letter-spacing:-0.439px;">Move Up</span>
<span class="t" style="left:414.70px;top:636.00px;font-size:11.5px;color:#6d6d6d;letter-spacing:-0.465px;">Move Down</span>
<span class="t" style="left:684.90px;top:636.00px;font-size:11.5px;color:#000;letter-spacing:-0.384px;">Add</span>
<span class="t" style="left:755.50px;top:636.00px;font-size:11.5px;color:#000;letter-spacing:-0.486px;">Remove</span>
<span class="t" style="left:296.10px;top:670.00px;font-size:11.5px;color:#000;letter-spacing:-0.606px;">Inputs</span>
<span class="t" style="left:297.00px;top:693.00px;font-size:11.5px;color:#000;letter-spacing:-0.896px;">Name</span>
<span class="t" style="left:467.70px;top:693.00px;font-size:11.5px;color:#000;letter-spacing:-0.433px;">Datatype</span>
<span class="t" style="left:547.50px;top:693.00px;font-size:11.5px;color:#000;letter-spacing:-0.291px;">Value</span>
<span class="t" style="left:297.70px;top:720.00px;font-size:11.5px;color:#000;letter-spacing:-0.484px;">Window Titles (as Collection)</span>
<span class="t" style="left:466.90px;top:718.00px;font-size:11.5px;color:#000;letter-spacing:-0.600px;">Collection</span>
<span class="t" style="left:297.70px;top:746.00px;font-size:11.5px;color:#2b8a24;letter-spacing:-0.090px;">Window Title</span>
<span class="t" style="left:468.20px;top:746.00px;font-size:11.5px;color:#2b8a24;letter-spacing:0.202px;">Text</span>
<span class="t" style="left:547.90px;top:746.00px;font-size:11.5px;color:#000;letter-spacing:-0.114px;">[Window Title]</span>
<span class="t" style="left:297.70px;top:771.00px;font-size:11.5px;color:#2b8a24;letter-spacing:-0.193px;">Process Name</span>
<span class="t" style="left:468.20px;top:771.00px;font-size:11.5px;color:#2b8a24;letter-spacing:0.202px;">Text</span>
<span class="t" style="left:547.90px;top:771.00px;font-size:11.5px;color:#000;letter-spacing:-0.239px;">[Process Name]</span>
</body></html>
